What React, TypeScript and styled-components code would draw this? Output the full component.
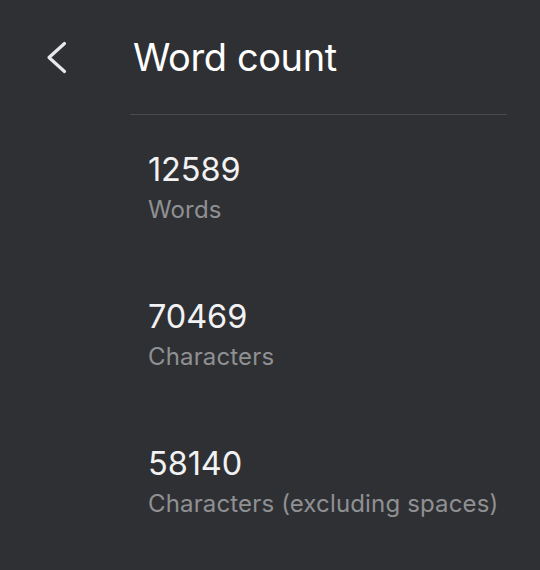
import React from "react";
import styled, { createGlobalStyle } from "styled-components";

const Global = createGlobalStyle`
  html, body { margin: 0; padding: 0; background: #2f3033; }
  body { font-family: Inter, Roboto, sans-serif; -webkit-font-smoothing: antialiased; }
`;

const Page = styled.div`
  width: 540px;
  height: 570px;
  background: #2f3033;
  display: grid;
  grid-template-columns: 130px 1fr;
  grid-template-rows: 115px 1fr;
`;

const BackButton = styled.button`
  background: none;
  border: none;
  padding: 41px 0 0 44px;
  margin: 0;
  display: flex;
  align-items: flex-start;
  cursor: pointer;
`;

const Header = styled.div`
  border-bottom: 1px solid #4a4b4f;
  margin-right: 33px;
  display: flex;
  align-items: flex-start;
`;

const Title = styled.h1`
  margin: 0;
  padding: 31px 0 0 3px;
  font-weight: 400;
  font-size: 38px;
  line-height: 52px;
  color: #ffffff;
  letter-spacing: -0.4px;
`;

const List = styled.div`
  grid-column: 2;
  display: flex;
  flex-direction: column;
  padding: 36px 0 0 18px;
  gap: 71px;
`;

const Stat = styled.div`
  display: flex;
  flex-direction: column;
  gap: 4px;
`;

const Value = styled.div`
  font-size: 32.5px;
  line-height: 38px;
  color: #f2f2f3;
  letter-spacing: -0.1px;
`;

const Label = styled.div`
  font-size: 24px;
  line-height: 34px;
  color: #8f9094;
  letter-spacing: 0.15px;
`;

const stats = [
  { value: "12589", label: "Words" },
  { value: "70469", label: "Characters" },
  { value: "58140", label: "Characters (excluding spaces)" },
];

export default function App() {
  return (
    <Page>
      <Global />
      <BackButton aria-label="Back">
        <svg width="28" height="34" viewBox="0 0 28 34" fill="none">
          <path d="M20.5 2.5 L5 16.5 L20.5 30.5" stroke="#e8e8ea" strokeWidth="3.2" strokeLinecap="round" strokeLinejoin="round" />
        </svg>
      </BackButton>
      <Header>
        <Title>Word count</Title>
      </Header>
      <List>
        {stats.map((s) => (
          <Stat key={s.value}>
            <Value>{s.value}</Value>
            <Label>{s.label}</Label>
          </Stat>
        ))}
      </List>
    </Page>
  );
}
